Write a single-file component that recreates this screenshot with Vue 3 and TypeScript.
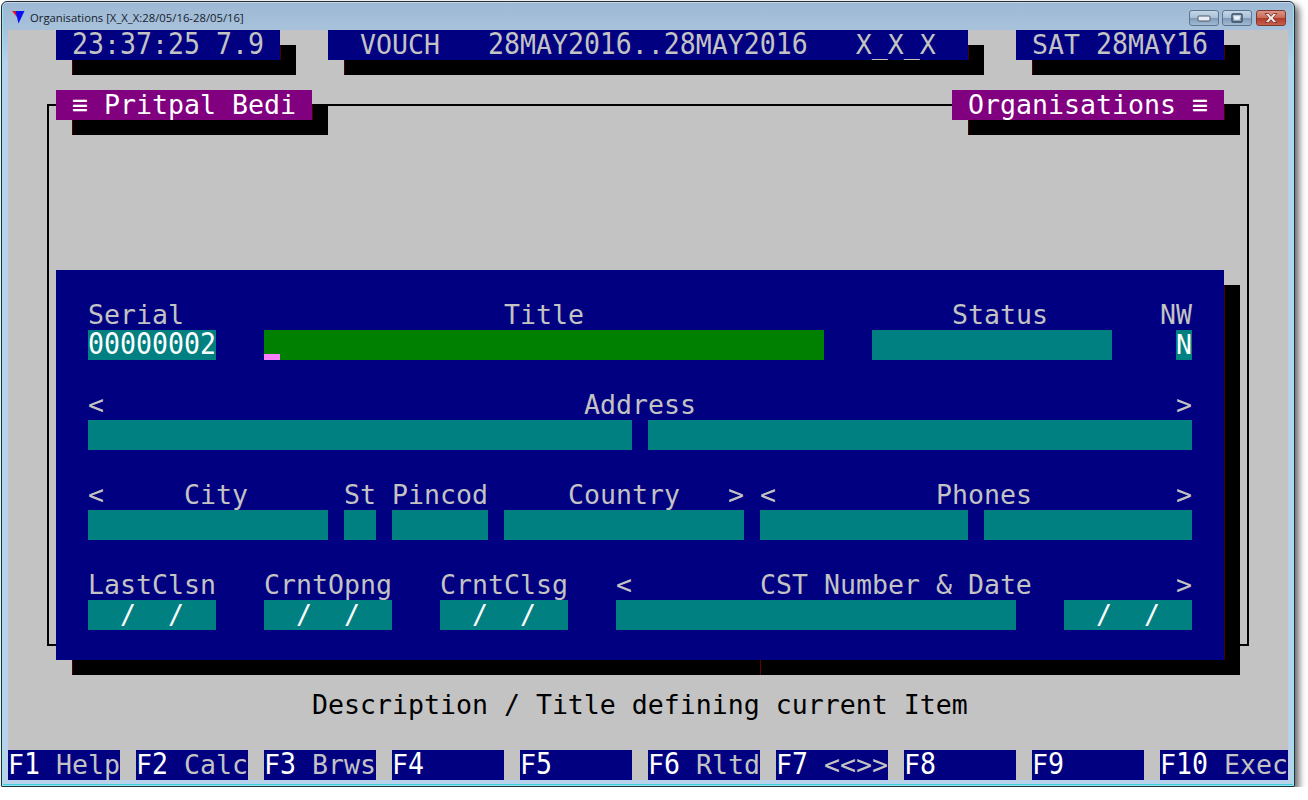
<script setup lang="ts">
type Cell = { c: number; r: number; w?: number; h?: number; t?: string; k: string };

const cells: Cell[] = [
  { c: 2, r: 2, w: 76, h: 19, k: 'frame' },
  { c: 3, r: 0, w: 14, t: ' 23:37:25 7.9', k: 'head' },
  { c: 20, r: 0, w: 40, t: '  VOUCH   28MAY2016..28MAY2016   X_X_X', k: 'head' },
  { c: 63, r: 0, w: 13, t: ' SAT 28MAY16', k: 'head' },
  { c: 3, r: 2, w: 16, t: ' ≡ Pritpal Bedi', k: 'tag' },
  { c: 59, r: 2, w: 17, t: ' Organisations ≡', k: 'tag' },
  { c: 3, r: 8, w: 73, h: 13, k: 'panel' },
  { c: 47, r: 21, k: 'glitch' },

  { c: 5, r: 9, t: 'Serial', k: 'label' },
  { c: 31, r: 9, t: 'Title', k: 'label' },
  { c: 59, r: 9, t: 'Status', k: 'label' },
  { c: 72, r: 9, t: 'NW', k: 'label' },
  { c: 5, r: 10, w: 8, t: '00000002', k: 'field' },
  { c: 16, r: 10, w: 35, k: 'active' },
  { c: 54, r: 10, w: 15, k: 'field' },
  { c: 73, r: 10, w: 1, t: 'N', k: 'field' },

  { c: 5, r: 12, t: '<', k: 'label' },
  { c: 36, r: 12, t: 'Address', k: 'label' },
  { c: 73, r: 12, t: '>', k: 'label' },
  { c: 5, r: 13, w: 34, k: 'field' },
  { c: 40, r: 13, w: 34, k: 'field' },

  { c: 5, r: 15, t: '<', k: 'label' },
  { c: 11, r: 15, t: 'City', k: 'label' },
  { c: 21, r: 15, t: 'St', k: 'label' },
  { c: 24, r: 15, t: 'Pincod', k: 'label' },
  { c: 35, r: 15, t: 'Country', k: 'label' },
  { c: 45, r: 15, t: '>', k: 'label' },
  { c: 47, r: 15, t: '<', k: 'label' },
  { c: 58, r: 15, t: 'Phones', k: 'label' },
  { c: 73, r: 15, t: '>', k: 'label' },
  { c: 5, r: 16, w: 15, k: 'field' },
  { c: 21, r: 16, w: 2, k: 'field' },
  { c: 24, r: 16, w: 6, k: 'field' },
  { c: 31, r: 16, w: 15, k: 'field' },
  { c: 47, r: 16, w: 13, k: 'field' },
  { c: 61, r: 16, w: 13, k: 'field' },

  { c: 5, r: 18, t: 'LastClsn', k: 'label' },
  { c: 16, r: 18, t: 'CrntOpng', k: 'label' },
  { c: 27, r: 18, t: 'CrntClsg', k: 'label' },
  { c: 38, r: 18, t: '<', k: 'label' },
  { c: 47, r: 18, t: 'CST Number & Date', k: 'label' },
  { c: 73, r: 18, t: '>', k: 'label' },
  { c: 5, r: 19, w: 8, t: '  /  /', k: 'field' },
  { c: 16, r: 19, w: 8, t: '  /  /', k: 'field' },
  { c: 27, r: 19, w: 8, t: '  /  /', k: 'field' },
  { c: 38, r: 19, w: 25, k: 'field' },
  { c: 66, r: 19, w: 8, t: '  /  /', k: 'field' },

  { c: 19, r: 22, t: 'Description / Title defining current Item', k: 'hint' },
];

const keys = [
  { c: 0, w: 7, f: 'F1', n: ' Help' },
  { c: 8, w: 7, f: 'F2', n: ' Calc' },
  { c: 16, w: 7, f: 'F3', n: ' Brws' },
  { c: 24, w: 7, f: 'F4', n: '' },
  { c: 32, w: 7, f: 'F5', n: '' },
  { c: 40, w: 7, f: 'F6', n: ' Rltd' },
  { c: 48, w: 7, f: 'F7', n: ' <<>>' },
  { c: 56, w: 7, f: 'F8', n: '' },
  { c: 64, w: 7, f: 'F9', n: '' },
  { c: 72, w: 8, f: 'F10', n: ' Exec' },
];

function place(c: number, r: number, w = 1, h = 1) {
  return { gridColumn: `${c + 1} / span ${w}`, gridRow: `${r + 1} / span ${h}` };
}

// The terminal font draws its digits taller than its capitals.
function runs(text = '') {
  return text.split(/(\d+)/).filter(Boolean).map((s) => ({ s, digit: /^\d/.test(s) }));
}
</script>

<template>
  <div class="window">
    <header class="titlebar">
      <svg class="app-icon" width="13" height="13" viewBox="0 0 13 13">
        <polygon points="0,0 7,0 5,6" fill="#e8101c" />
        <polygon points="3.500,0 12.500,0 6.500,12.500" fill="#0a10f0" />
      </svg>
      <span class="caption">Organisations [X_X_X:28/05/16-28/05/16]</span>
      <div class="controls">
        <div class="ctl">
          <svg width="14" height="8" viewBox="0 0 14 8"><rect x="1" y="2" width="12" height="5" rx="1" fill="#e8edf3" stroke="#4a5a70" /></svg>
        </div>
        <div class="ctl">
          <svg width="12" height="10" viewBox="0 0 12 10"><rect x="1" y="1" width="10" height="8" rx="1" fill="none" stroke="#3a4a60" stroke-width="1.4" /><rect x="3.500" y="3.500" width="5" height="3" fill="#eef3f8" stroke="#eef3f8" stroke-width=".6" /></svg>
        </div>
        <div class="ctl close">
          <svg width="16" height="12" viewBox="0 0 16 12"><path d="M2 1.500h3.500L8 4.300l2.500-2.800H14L10 6l4 4.500h-3.500L8 7.700l-2.500 2.800H2L6 6z" fill="#f3ecea" stroke="#6d2a20" stroke-width=".8" /></svg>
        </div>
      </div>
    </header>

    <main class="screen">
      <div
        v-for="(cell, i) in cells"
        :key="i"
        class="cell"
        :class="cell.k"
        :style="place(cell.c, cell.r, cell.w, cell.h)"
      ><span v-for="(run, j) in runs(cell.t)" :key="j" :class="{ digit: run.digit }">{{ run.s }}</span></div>
      <div
        v-for="key in keys"
        :key="key.f"
        class="cell fkey"
        :style="place(key.c, 24, key.w)"
      ><b><span v-for="(run, j) in runs(key.f)" :key="j" :class="{ digit: run.digit }">{{ run.s }}</span></b>{{ key.n }}</div>
    </main>
  </div>
</template>

<style>
body {
  margin: 0;
  background: #fff;
  overflow: hidden;
}
</style>

<style scoped>
.window {
  box-sizing: border-box;
  width: 1294px;
  height: 786px;
  margin: 1px 0 0 1px;
  padding: 0 6px 5px;
  border: 1px solid #20303c;
  border-radius: 6px 6px 1px 1px;
  background: linear-gradient(180deg, #9db8d4 0, #a9c3dc 30px, #b9d1ea 60px, #b9d1ea 100%);
  box-shadow: inset 0 0 0 1px rgba(255, 255, 255, 0.45), inset 0 -1px 0 1px #3fd0e0, 4px 4px 7px rgba(0, 0, 0, 0.6);
}
.titlebar {
  display: flex;
  align-items: center;
  height: 28px;
}
.app-icon {
  margin: 2px 0 0 4px;
}
.caption {
  margin: 2px 0 0 5px;
  font: 11.3px "Open Sans", "Noto Sans", sans-serif;
  color: #15202c;
  white-space: pre;
}
.controls {
  display: flex;
  gap: 3px;
  margin: 4px 2px 0 auto;
}
.ctl {
  display: flex;
  align-items: center;
  justify-content: center;
  box-sizing: border-box;
  width: 30px;
  height: 16px;
  border: 1px solid #5c7490;
  border-radius: 3px;
  background: linear-gradient(180deg, #c5d6e6 0, #a9c0d6 48%, #7f9ab6 52%, #a3bbd2 100%);
}
.close {
  margin-left: 1px;
  border-color: #7a3a30;
  background: linear-gradient(180deg, #dc9486 0, #c96a58 48%, #b2392a 52%, #c8604c 100%);
}
.screen {
  display: grid;
  grid-template-columns: repeat(80, 16px);
  grid-template-rows: repeat(25, 30px);
  width: 1280px;
  height: 750px;
  background: #c3c3c3;
  font-family: "DejaVu Sans Mono", monospace;
  font-size: 26.57px;
  line-height: 30px;
  white-space: pre;
}
.cell {
  position: relative;
  min-width: 0;
  min-height: 0;
}
.digit {
  display: inline-block;
  transform: scaleY(1.13);
  transform-origin: 0 24px;
}
.frame {
  box-sizing: border-box;
  margin: 14px 7px;
  border: 2px solid #000;
}
.head,
.tag,
.panel {
  box-shadow: 16px 15px 0 #000;
}
.head::before,
.tag::before,
.panel::before {
  content: "";
  position: absolute;
  left: 16px;
  top: 100%;
  width: 1px;
  height: 15px;
  background: #4a0000;
}
.head::after,
.tag::after,
.panel::after {
  content: "";
  position: absolute;
  right: 0;
  top: 15px;
  bottom: 0;
  width: 1px;
  transform: translateX(1px);
  background: #4a0000;
}
.head {
  background: #000080;
  color: #c3c3c3;
}
.tag {
  background: #800080;
  color: #fff;
}
.panel {
  background: #000080;
}
.glitch {
  width: 1px;
  height: 15px;
  background: #6a0000;
}
.label {
  color: #c3c3c3;
}
.field {
  background: #008080;
  color: #fff;
}
.active {
  background: #008000;
}
.active::after {
  content: "";
  position: absolute;
  left: 0;
  bottom: 0;
  width: 16px;
  height: 6px;
  background: #ff80ff;
}
.hint {
  color: #000;
}
.fkey {
  background: #000080;
  color: #c3c3c3;
}
.fkey b {
  font-weight: 400;
  color: #fff;
}
</style>
